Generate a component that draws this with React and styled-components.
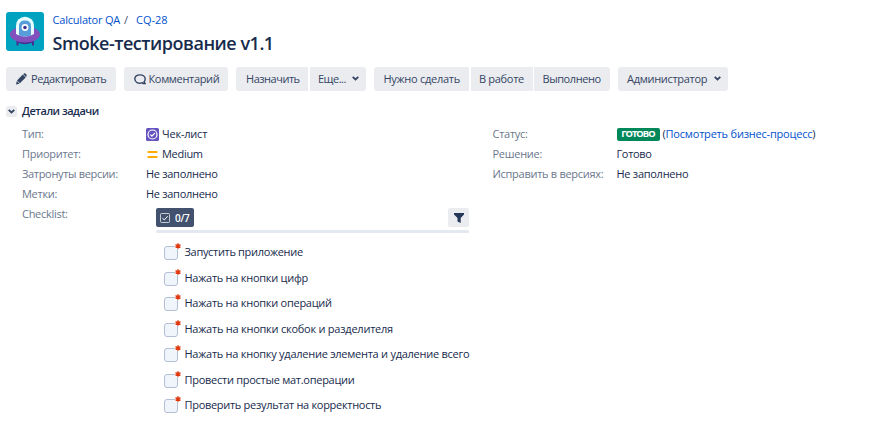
import React from "react";
import styled, { createGlobalStyle } from "styled-components";

const GlobalStyle = createGlobalStyle`
  * { box-sizing: border-box; }
  body {
    margin: 0;
    background: #fff;
    color: #172b4d;
    font: 11px/20px "Open Sans", "Noto Sans", sans-serif;
    overflow: hidden;
  }
`;

const Page = styled.main`
  width: 877px;
  height: 427px;
  padding: 12px 6px 0;
`;

const Text = styled.span`
  letter-spacing: ${(p) => p.$track ?? -0.26}px;
  white-space: nowrap;
`;

const Header = styled.header`
  display: flex;
  gap: 8.5px;
  height: 55px;
`;

const Avatar = styled.svg`
  width: 38px;
  height: 39px;
  flex: none;
`;

const Breadcrumbs = styled.nav`
  display: flex;
  height: 16px;
  line-height: 16px;
`;

const Link = styled.a`
  color: #0052cc;
  letter-spacing: ${(p) => p.$track ?? -0.2}px;
  white-space: nowrap;
`;

const Slash = styled.span`
  width: 16px;
  padding-left: 4px;
  color: #42526e;
`;

const Title = styled.h1`
  margin: 3px 0 0;
  font-size: 18px;
  line-height: 25px;
  font-weight: 600;
  letter-spacing: -0.47px;
  white-space: nowrap;
`;

const Toolbar = styled.div`
  display: flex;
  gap: 8px;
  height: 24px;
`;

const ButtonGroup = styled.div`
  display: flex;
  border-radius: 3px;
  overflow: hidden;
`;

const Button = styled.button`
  display: flex;
  align-items: center;
  width: ${(p) => p.$width}px;
  height: 24px;
  margin-right: ${(p) => p.$after || 0}px;
  padding: 0 0 0 ${(p) => p.$pad || 10}px;
  border: 0;
  background: #ebecf0;
  color: #344563;
  font: inherit;
  line-height: 24px;
`;

const IconSlot = styled.span`
  display: flex;
  flex: none;
  width: ${(p) => p.$width}px;
`;

const MenuChevron = styled.span`
  display: flex;
  margin: -2px 7px 0 auto;
`;

const Section = styled.h2`
  display: flex;
  align-items: center;
  gap: 5px;
  height: 20px;
  margin: 10px 0 3px;
  font-size: 11px;
  font-weight: 600;
`;

const Toggle = styled.span`
  display: flex;
  align-items: center;
  justify-content: center;
  width: 11px;
  height: 11px;
  border-radius: 2px;
  background: #ebecf0;
`;

const Columns = styled.div`
  display: grid;
  grid-template-columns: 470.5px 1fr;
  align-items: start;
  padding-left: 16px;
`;

const Fields = styled.dl`
  display: grid;
  grid-template-columns: 124px 1fr;
  grid-auto-rows: minmax(20px, auto);
  margin: 0;
`;

const Label = styled.dt`
  color: #6b778c;
  letter-spacing: ${(p) => p.$track ?? -0.28}px;
  white-space: nowrap;
`;

const Value = styled.dd`
  display: flex;
  align-items: center;
  margin: 0;
`;

const FieldIcon = styled.svg`
  flex: none;
  width: 13px;
  height: 13px;
  margin-right: 3px;
`;

const Lozenge = styled.span`
  width: 43px;
  height: 13px;
  margin-right: 3px;
  border-radius: 2px;
  background: #00875a;
  color: #fff;
  font-family: "Noto Sans", sans-serif;
  font-size: 9px;
  line-height: 12px;
  font-weight: 700;
  letter-spacing: -0.9px;
  font-size: 9.5px;
  text-align: center;
`;

const Checklist = styled.section`
  width: 313px;
  margin-left: 10px;
  padding-top: 4px;
`;

const ChecklistBar = styled.div`
  display: flex;
  justify-content: space-between;
  height: 19px;
`;

const Counter = styled.span`
  display: flex;
  align-items: center;
  gap: 5px;
  width: 38px;
  height: 19px;
  padding-left: 4px;
  border-radius: 2px;
  background: #42526e;
  color: #fff;
  font-size: 10px;
  font-weight: 600;
  letter-spacing: -0.3px;
`;

const FilterButton = styled.button`
  display: flex;
  align-items: center;
  justify-content: center;
  width: 21px;
  height: 19px;
  padding: 0;
  border: 0;
  border-radius: 2px;
  background: #ebecf0;
`;

const Progress = styled.div`
  height: 3px;
  margin-top: 3px;
  border-radius: 2px;
  background: #e4e8f0;
`;

const Items = styled.ul`
  margin: 6.3px 0 0;
  padding: 0 0 0 8px;
  list-style: none;
`;

const Item = styled.li`
  display: flex;
  align-items: center;
  height: 25.55px;
`;

const Checkbox = styled.span`
  position: relative;
  flex: none;
  width: 14px;
  height: 14px;
  margin: 2px 6.5px 0 0;
  border: 1px solid #b3bfd4;
  border-radius: 3px;
  background: #f0f4fb;
`;

const Required = styled.svg`
  position: absolute;
  right: -4px;
  top: -4px;
  background: #fff;
`;

const Chevron = () => (
  <svg width="7" height="5" viewBox="0 0 7 5" fill="none" stroke="#344563" strokeWidth="1.8">
    <path d="M.7.9 3.5 3.5 6.3.9" />
  </svg>
);

const Pencil = () => (
  <svg width="11" height="12" viewBox="0 0 11 12" fill="#344563">
    <path d="M0 11.5.8 8 3.5 10.7ZM1 7.4 6.8 1.6 9.7 4.5 3.9 10.3ZM7.3 1.2 8 .5Q9 0 10 1T10.6 3.2L10 4Z" />
  </svg>
);

const Comment = () => (
  <svg width="12" height="11" viewBox="0 0 12 11" fill="none" stroke="#344563" strokeWidth="1.4">
    <path d="M8.3 8.6C4.400 10.200.8 8.1.8 5.1S3 .9 6 .9s5.2 1.8 5.2 4.2c0 1.4-.6 2.3-1.2 2.900l1.200 1.600H9L8 8.300" />
  </svg>
);

const TickBox = () => (
  <svg width="10" height="10" viewBox="0 0 10 10" fill="none" stroke="#fff">
    <rect x=".5" y=".5" width="9" height="9" rx="1" strokeWidth=".7" />
    <path d="m2.4 5.1 1.9 1.8 3.4-3.7" />
  </svg>
);

const Funnel = () => (
  <svg width="10" height="10" viewBox="0 0 10 10" fill="#253858">
    <path d="M0 0h10v1.4L6.7 5v5L3.5 8.400V5L0 1.400Z" />
  </svg>
);

const groups = [
  [{ label: "Редактировать", width: 110, icon: <Pencil />, slot: 15, track: -0.4 }],
  [{ label: "Комментарий", width: 104, icon: <Comment />, slot: 14.5, track: -0.34 }],
  [
    { label: "Назначить", width: 72, after: 2, track: -0.48 },
    { label: "Еще...", width: 56, pad: 8, menu: true, track: -0.5 },
  ],
  [
    { label: "Нужно сделать", width: 95, after: 2, pad: 9.5, track: -0.28 },
    { label: "В работе", width: 62, after: 1, pad: 8, track: -0.3 },
    { label: "Выполнено", width: 76, pad: 8.5, track: -0.42 },
  ],
  [{ label: "Администратор", width: 110, pad: 9, menu: true, track: -0.3 }],
];

const tasks = [
  { label: "Запустить приложение", track: -0.32 },
  { label: "Нажать на кнопки цифр" },
  { label: "Нажать на кнопки операций" },
  { label: "Нажать на кнопки скобок и разделителя", track: -0.24 },
  { label: "Нажать на кнопку удаление элемента и удаление всего" },
  { label: "Провести простые мат.операции", track: -0.27 },
  { label: "Проверить результат на корректность", track: -0.3 },
];

export default function App() {
  return (
    <Page>
      <GlobalStyle />
      <Header>
        <Avatar viewBox="0 0 38 39">
          <rect width="38" height="39" rx="3" fill="#00a3bf" />
          <path d="M11.500 27v6.500M27 27v6.500" stroke="#403294" strokeWidth="2" />
          <ellipse cx="19" cy="28.500" rx="9" ry="3.700" fill="#403294" />
          <ellipse cx="19" cy="22.500" rx="15" ry="8" fill="#8150bd" />
          <path d="M10 22V13.500a9 8.700 0 0 1 18 0V22Q19 27 10 22" fill="#e6fcff" />
          <path d="M13 23.500V14q0-5.500 6-5.500T25 14v9.500q-6 2-12 0" fill="#579dd9" />
          <circle cx="19" cy="15.500" r="3.400" fill="#fff" />
          <circle cx="19" cy="15.500" r="1.800" fill="#403294" />
        </Avatar>
        <div>
          <Breadcrumbs>
            <Link $track={-0.2}>Calculator QA</Link>
            <Slash>/</Slash>
            <Link $track={0}>CQ-28</Link>
          </Breadcrumbs>
          <Title>Smoke-тестирование v1.1</Title>
        </div>
      </Header>

      <Toolbar>
        {groups.map((group) => (
          <ButtonGroup key={group[0].label}>
            {group.map((b) => (
              <Button key={b.label} $width={b.width} $pad={b.pad} $after={b.after}>
                {b.icon && <IconSlot $width={b.slot}>{b.icon}</IconSlot>}
                <Text $track={b.track}>{b.label}</Text>
                {b.menu && <MenuChevron><Chevron /></MenuChevron>}
              </Button>
            ))}
          </ButtonGroup>
        ))}
      </Toolbar>

      <Section>
        <Toggle><Chevron /></Toggle>
        <Text $track={-0.48}>Детали задачи</Text>
      </Section>

      <Columns>
        <Fields>
          <Label>Тип:</Label>
          <Value>
            <FieldIcon viewBox="0 0 13 13" fill="none">
              <rect width="13" height="13" rx="1.5" fill="#6554c0" />
              <circle cx="6.5" cy="6.5" r="4.5" stroke="#fff" strokeWidth="1.2" />
              <path d="m4.400 6.600 1.500 1.500 2.900-3" stroke="#fff" strokeWidth="1.3" />
            </FieldIcon>
            <Text $track={-0.2}>Чек-лист</Text>
          </Value>
          <Label>Приоритет:</Label>
          <Value>
            <FieldIcon viewBox="0 0 13 13" fill="#ffab00">
              <rect x="1.500" y="3" width="10" height="2" rx=".5" />
              <rect x="1.500" y="8" width="10" height="2" rx=".5" />
            </FieldIcon>
            <Text $track={-0.3}>Medium</Text>
          </Value>
          <Label $track={-0.33}>Затронуты версии:</Label>
          <Value><Text $track={-0.29}>Не заполнено</Text></Value>
          <Label>Метки:</Label>
          <Value><Text $track={-0.29}>Не заполнено</Text></Value>
          <Label>Checklist:</Label>
          <Value>
            <Checklist>
              <ChecklistBar>
                <Counter><TickBox />0/7</Counter>
                <FilterButton aria-label="Фильтр"><Funnel /></FilterButton>
              </ChecklistBar>
              <Progress />
              <Items>
                {tasks.map(({ label, track }) => (
                  <Item key={label}>
                    <Checkbox>
                      <Required width="6" height="6" viewBox="0 0 6 6" stroke="#de350b" strokeWidth="1.4">
                        <path d="M3 .2v5.600M.5 1.600l5 2.800M5.500 1.600l-5 2.800" />
                      </Required>
                    </Checkbox>
                    <Text $track={track}>{label}</Text>
                  </Item>
                ))}
              </Items>
            </Checklist>
          </Value>
        </Fields>
        <Fields>
          <Label>Статус:</Label>
          <Value>
            <Lozenge>ГОТОВО</Lozenge>
            <Text $track={-0.2}>(<Link $track={-0.2}>Посмотреть бизнес-процесс</Link>)</Text>
          </Value>
          <Label>Решение:</Label>
          <Value><Text $track={-0.35}>Готово</Text></Value>
          <Label>Исправить в версиях:</Label>
          <Value><Text $track={-0.27}>Не заполнено</Text></Value>
        </Fields>
      </Columns>
    </Page>
  );
}
